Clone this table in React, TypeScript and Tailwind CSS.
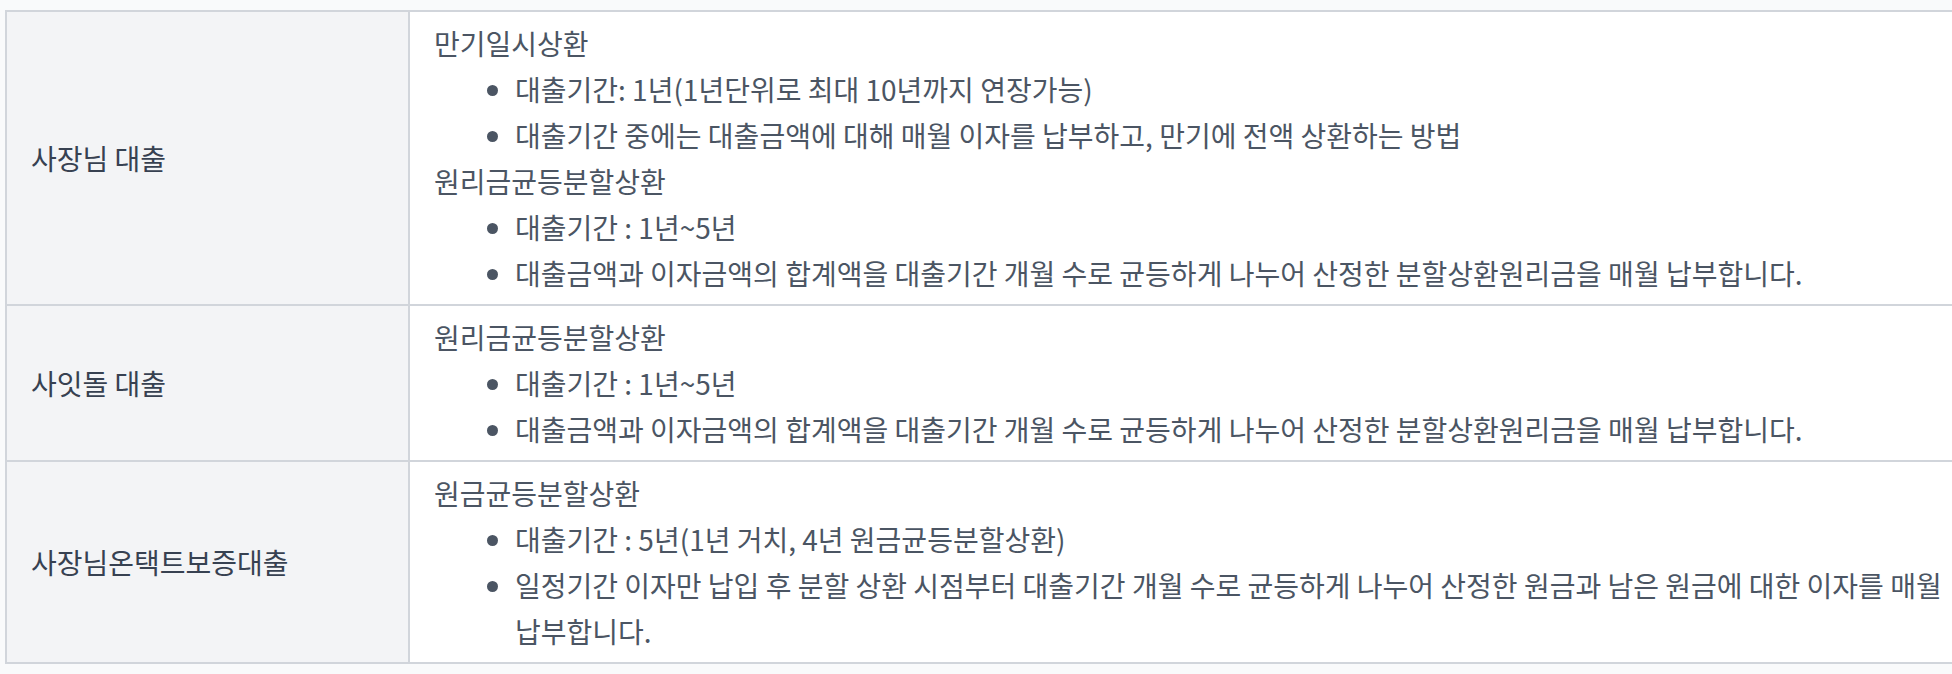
import React from "react";

interface RepaymentGroup {
    title: string;
    items: string[];
}

interface LoanRow {
    name: string;
    groups: RepaymentGroup[];
}

const equalPrincipalInterest: RepaymentGroup = {
    title: "원리금균등분할상환",
    items: [
        "대출기간 : 1년~5년",
        "대출금액과 이자금액의 합계액을 대출기간 개월 수로 균등하게 나누어 산정한 분할상환원리금을 매월 납부합니다.",
    ],
};

const rows: LoanRow[] = [
    {
        name: "사장님 대출",
        groups: [
            {
                title: "만기일시상환",
                items: [
                    "대출기간: 1년(1년단위로 최대 10년까지 연장가능)",
                    "대출기간 중에는 대출금액에 대해 매월 이자를 납부하고, 만기에 전액 상환하는 방법",
                ],
            },
            equalPrincipalInterest,
        ],
    },
    {
        name: "사잇돌 대출",
        groups: [equalPrincipalInterest],
    },
    {
        name: "사장님온택트보증대출",
        groups: [
            {
                title: "원금균등분할상환",
                items: [
                    "대출기간 : 5년(1년 거치, 4년 원금균등분할상환)",
                    "일정기간 이자만 납입 후 분할 상환 시점부터 대출기간 개월 수로 균등하게 나누어 산정한 원금과 남은 원금에 대한 이자를 매월 납부합니다.",
                ],
            },
        ],
    },
];

export default function App() {
    return (
        <div
            className="min-h-screen w-full overflow-hidden bg-[#f9fafb] pl-[5px] pt-[10px]"
            style={{ fontFamily: '"Noto Sans CJK KR", "Noto Sans", sans-serif' }}
        >
            <table className="w-[2021px] table-fixed border-collapse border-2 border-[#d1d5db] text-[28px] leading-[46px] break-keep">
                <colgroup>
                    <col className="w-[403px]" />
                    <col />
                </colgroup>
                <tbody>
                    {rows.map((row) => (
                        <tr key={row.name}>
                            {/* Loan name cell */}
                            <td className="border-2 border-[#d1d5db] bg-[#f3f4f6] px-6 align-middle text-[#374151]">
                                {row.name}
                            </td>
                            {/* Repayment description */}
                            <td className="border-2 border-[#d1d5db] bg-white px-6 py-2 align-top text-[#4b5563]">
                                {row.groups.map((group, i) => (
                                    <div key={i}>
                                        <p>{group.title}</p>
                                        <ul className="list-disc pl-[81px]">
                                            {group.items.map((item) => (
                                                <li key={item}>{item}</li>
                                            ))}
                                        </ul>
                                    </div>
                                ))}
                            </td>
                        </tr>
                    ))}
                </tbody>
            </table>
        </div>
    );
}
